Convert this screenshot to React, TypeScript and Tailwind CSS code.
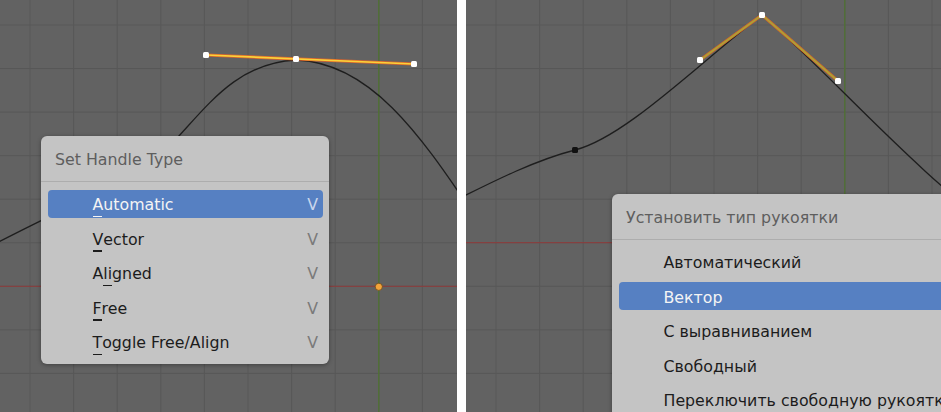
import React from 'react';

const GRID_X = Array.from({ length: 11 }, (_, i) => 30 + i * 43.6);
const GRID_Y = Array.from({ length: 9 }, (_, i) => 25 + i * 43.55);

interface GraphProps {
  width: number;
  redY: number;
  children?: React.ReactNode;
}

// grid + axis lines of the graph editor
const Graph: React.FC<GraphProps> = ({ width, redY, children }) => (
  <svg className="absolute inset-0" width={width} height={412} viewBox={`0 0 ${width} 412`}>
    {GRID_X.map((x) => (
      <line key={`x${x}`} x1={x} y1={0} x2={x} y2={412} stroke="#585858" strokeWidth={1} />
    ))}
    {GRID_Y.map((y) => (
      <line key={`y${y}`} x1={0} y1={y} x2={width} y2={y} stroke="#585858" strokeWidth={1} />
    ))}
    <line x1={0} y1={redY} x2={width} y2={redY} stroke="#8f3b3b" strokeWidth={1} />
    <line x1={378.8} y1={0} x2={378.8} y2={412} stroke="#4f7330" strokeWidth={1.2} />
    {children}
  </svg>
);

interface ItemProps {
  label: string;
  mnemonic?: number;
  shortcut?: string;
  active?: boolean;
}

const MenuItem: React.FC<ItemProps> = ({ label, mnemonic, shortcut, active }) => {
  const before = mnemonic !== undefined ? label.slice(0, mnemonic) : label;
  const ch = mnemonic !== undefined ? label.charAt(mnemonic) : '';
  const after = mnemonic !== undefined ? label.slice(mnemonic + 1) : '';

  return (
    <div
      className={`flex h-[28px] items-center justify-between rounded-[4px] pt-[3px] pl-[45px] pr-[5px] whitespace-nowrap ${
        active ? 'bg-[#5680c2] text-[#f4f4f4]' : 'text-[#1c1c1c]'
      }`}
    >
      <span>
        {before}
        {ch && (
          <span className="relative">
            {ch}
            <span className="absolute left-0 bottom-[-3px] h-[1.5px] w-[9px] bg-current" />
          </span>
        )}
        {after}
      </span>
      {shortcut && (
        <span className={active ? 'text-[#c9d6ec]' : 'text-[#7a7a7a]'}>{shortcut}</span>
      )}
    </div>
  );
};

interface MenuProps {
  title: string;
  items: ItemProps[];
  className: string;
}

const Menu: React.FC<MenuProps> = ({ title, items, className }) => (
  <div
    className={`absolute rounded-[6px] bg-[#c4c4c4] text-[15.8px] shadow-[0_1px_4px_rgba(0,0,0,0.35)] ${className}`}
  >
    <div className="flex h-[46px] items-center border-b border-[#adadad] pt-[3px] pl-[14px] text-[#5e5e5e] whitespace-nowrap">
      {title}
    </div>
    <div className="flex flex-col gap-[6.5px] pt-[7.5px] pr-[6px] pl-[6.5px] pb-[8px]">
      {items.map((item) => (
        <MenuItem key={item.label} {...item} />
      ))}
    </div>
  </div>
);

const Dot: React.FC<{ x: number; y: number }> = ({ x, y }) => (
  <rect x={x - 3} y={y - 3} width={6} height={6} rx={1.5} fill="#ffffff" />
);

export default function App() {
  return (
    <div className="flex h-[412px] w-[941px] overflow-hidden bg-white font-['DejaVu_Sans',sans-serif]">
      {/* left: english menu */}
      <div className="relative h-full w-[457px] shrink-0 overflow-hidden bg-[#626262]">
        <Graph width={457} redY={286.3}>
          <path
            d="M -20 252 C 60 208, 130 185, 178 137 C 212 100, 240 63, 296 60 C 414 64, 470 245, 560 320"
            fill="none"
            stroke="#1e1e1e"
            strokeWidth={1.3}
          />
          <line x1={206} y1={55} x2={414} y2={64} stroke="#e0652a" strokeWidth={3.2} />
          <line x1={206} y1={55} x2={414} y2={64} stroke="#f8d23a" strokeWidth={1.6} />
          <Dot x={206} y={55} />
          <Dot x={296} y={59} />
          <Dot x={414} y={64} />
          <circle cx={378.8} cy={286.8} r={3.6} fill="#f3a43a" stroke="#6b4a1d" strokeWidth={0.8} />
        </Graph>
        <Menu
          className="left-[41px] top-[136px] w-[288px]"
          title="Set Handle Type"
          items={[
            { label: 'Automatic', mnemonic: 0, shortcut: 'V', active: true },
            { label: 'Vector', mnemonic: 0, shortcut: 'V' },
            { label: 'Aligned', mnemonic: 1, shortcut: 'V' },
            { label: 'Free', mnemonic: 0, shortcut: 'V' },
            { label: 'Toggle Free/Align', mnemonic: 0, shortcut: 'V' },
          ]}
        />
      </div>

      <div className="w-[9px] shrink-0 bg-white" />

      {/* right: russian menu */}
      <div className="relative h-full flex-1 overflow-hidden bg-[#626262]">
        <Graph width={475} redY={242.7}>
          <path
            d="M -10 200 C 30 180, 70 160, 109 150 C 160 137, 234 62, 296 15 C 372 81, 440 165, 560 255"
            fill="none"
            stroke="#1e1e1e"
            strokeWidth={1.3}
          />
          <polyline points="234,60 296,15 372,81" fill="none" stroke="#cf6f2a" strokeWidth={3} />
          <polyline points="234,60 296,15 372,81" fill="none" stroke="#a3ad3a" strokeWidth={1.3} />
          <Dot x={234} y={60} />
          <Dot x={296} y={15} />
          <Dot x={372} y={81} />
          <rect x={106} y={147} width={6} height={6} rx={1.5} fill="#111111" />
        </Graph>
        <Menu
          className="left-[146px] top-[194px] w-[420px]"
          title="Установить тип рукоятки"
          items={[
            { label: 'Автоматический' },
            { label: 'Вектор', active: true },
            { label: 'С выравниванием' },
            { label: 'Свободный' },
            { label: 'Переключить свободную рукоятку' },
          ]}
        />
      </div>
    </div>
  );
}
